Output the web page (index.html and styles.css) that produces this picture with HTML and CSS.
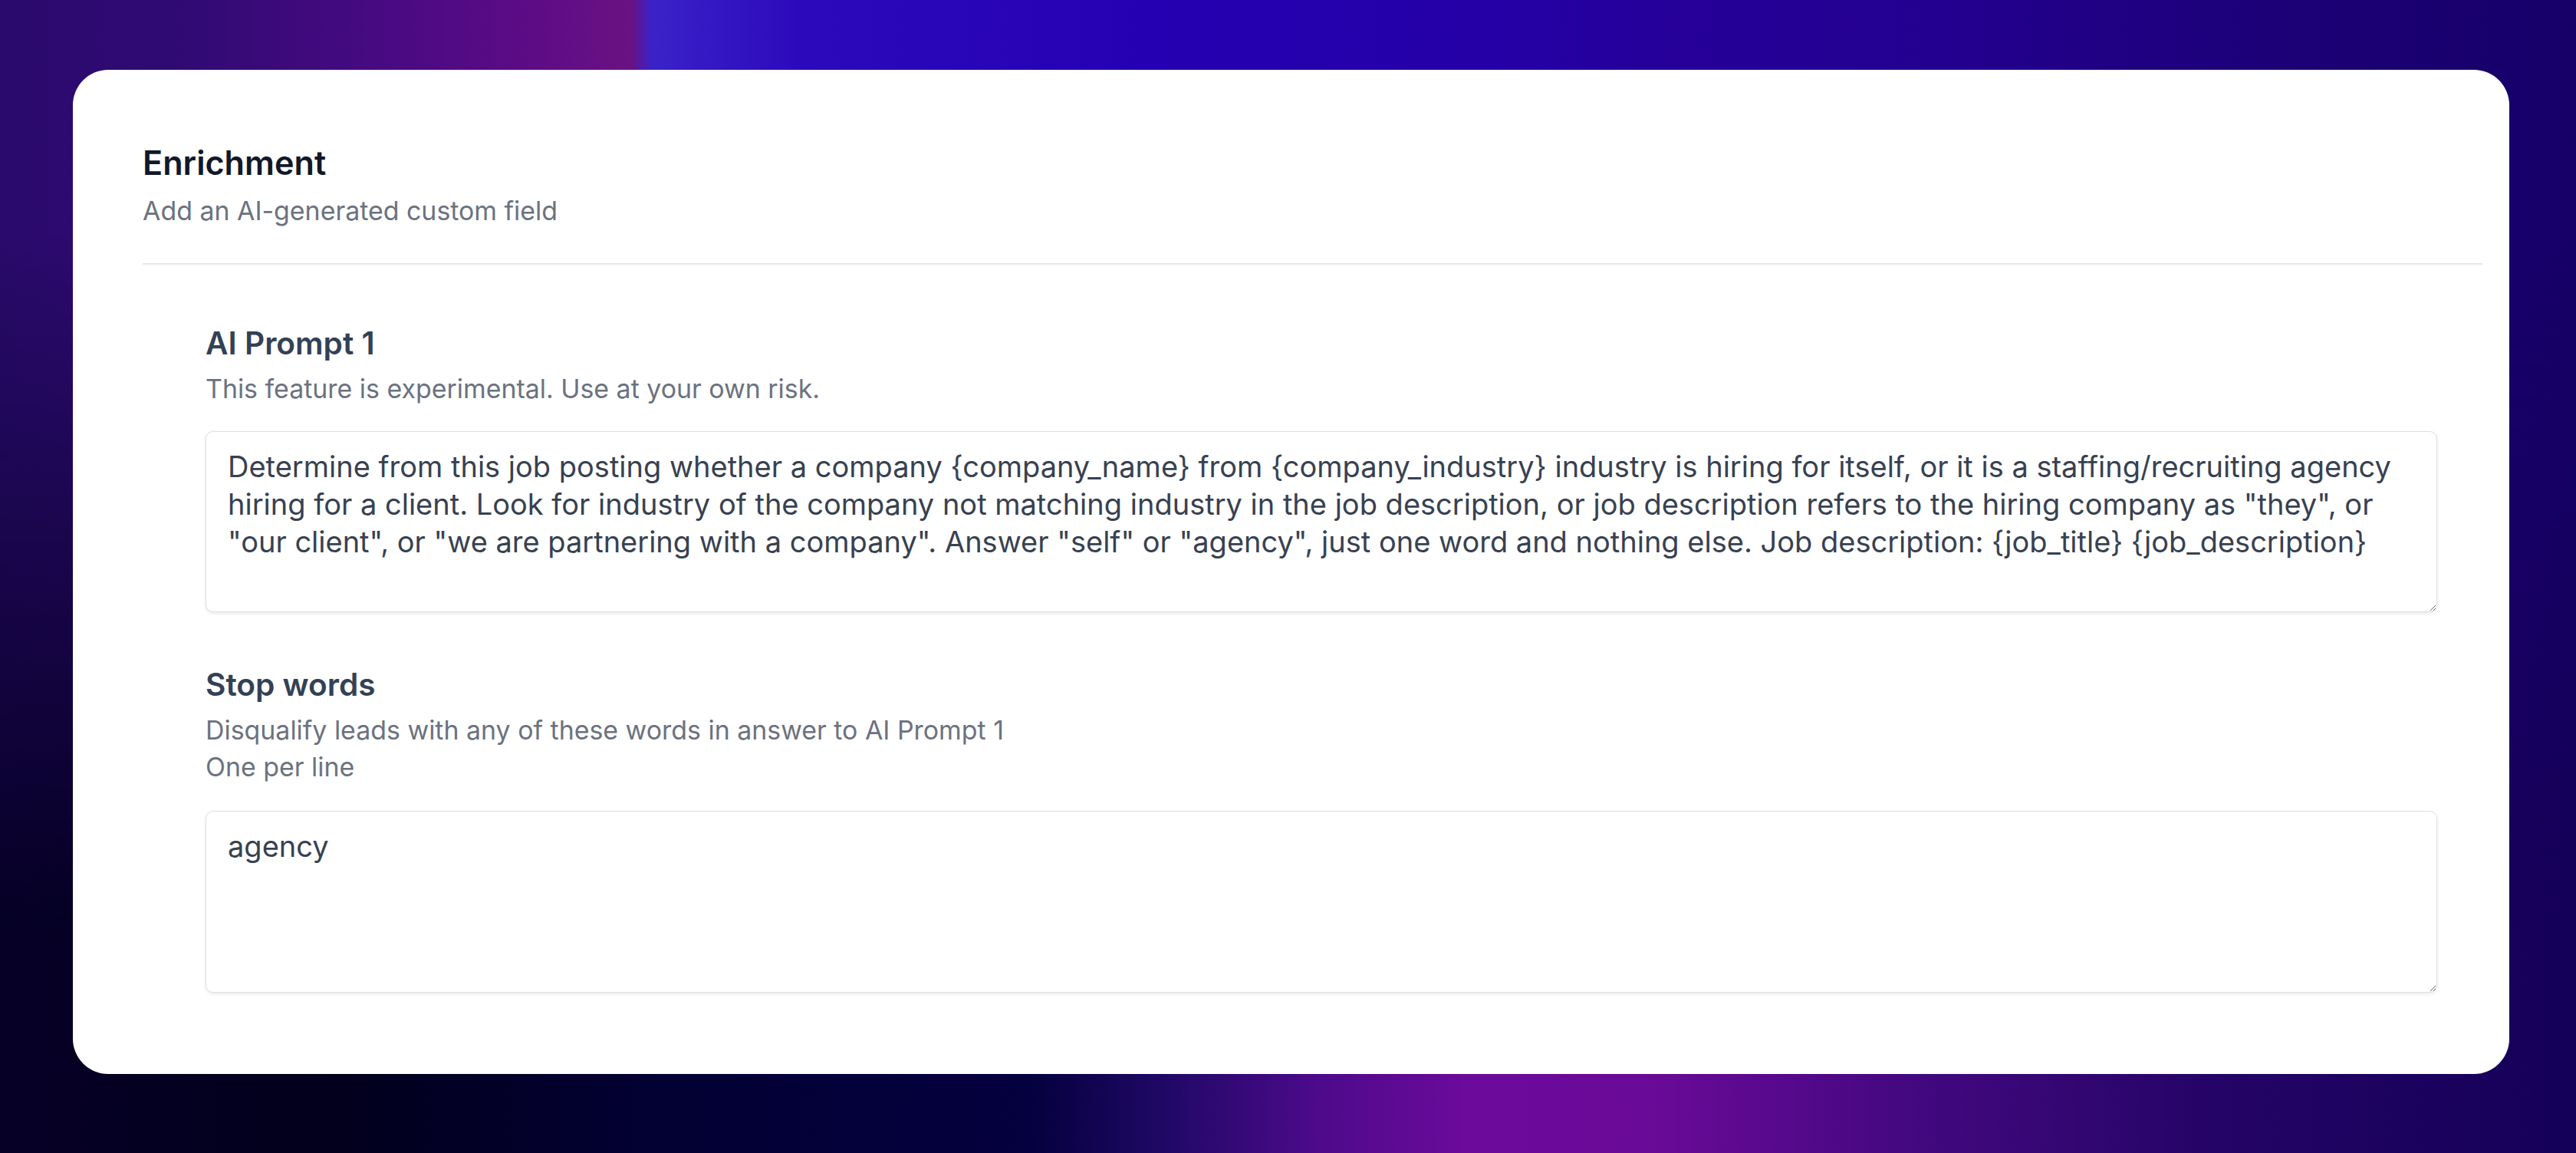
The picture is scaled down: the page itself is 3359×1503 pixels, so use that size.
FILE: index.html
```html
<!DOCTYPE html>
<html lang="en">
<head>
<meta charset="utf-8">
<title>Enrichment</title>
<link rel="stylesheet" href="styles.css">
</head>
<body>
<main class="card">
  <header class="card-header">
    <h2 class="title">Enrichment</h2>
    <p class="subtitle">Add an AI-generated custom field</p>
  </header>
  <section class="fields">
    <div class="field">
      <label class="label" for="prompt1">AI Prompt 1</label>
      <p class="help">This feature is experimental. Use at your own risk.</p>
      <textarea id="prompt1" class="input">Determine from this job posting whether a company {company_name} from {company_industry} industry is hiring for itself, or it is a staffing/recruiting agency hiring for a client. Look for industry of the company not matching industry in the job description, or job description refers to the hiring company as "they", or "our client", or "we are partnering with a company". Answer "self" or "agency", just one word and nothing else. Job description: {job_title} {job_description}</textarea>
    </div>
    <div class="field field-next">
      <label class="label" for="stopwords">Stop words</label>
      <p class="help">Disqualify leads with any of these words in answer to AI Prompt 1<br>One per line</p>
      <textarea id="stopwords" class="input input-second">agency</textarea>
    </div>
  </section>
</main>
</body>
</html>
```

FILE: styles.css
```css
html {
  background: linear-gradient(90deg, #060026 0%, #02001c 13%, #030034 26%, #05003e 40%, #1e0864 45%, #4c0a8a 51%, #6c0a9c 57%, #6a0a98 64%, #440880 74%, #240466 86%, #140058 100%);
}

body {
  margin: 0;
  min-height: 100vh;
  box-sizing: border-box;
  padding: 91px 87px 103px 95px;
  font-family: Inter, "Noto Sans", "Liberation Sans", sans-serif;
}

body::before {
  content: "";
  position: fixed;
  inset: 0;
  z-index: -1;
  background: linear-gradient(90deg, #2a0a6c 0%, #300a74 7%, #480a82 15%, #5e0c86 21%, #6a1282 24.5%, #3a22c8 25.3%, #2c0abc 31%, #2400b2 45%, #2500a6 58%, #26009a 64%, #240090 75%, #1c0078 88%, #160068 100%);
  -webkit-mask-image: linear-gradient(180deg, #000 0%, #000 20%, transparent 80%);
  mask-image: linear-gradient(180deg, #000 0%, #000 20%, transparent 80%);
}

.card {
  background: #ffffff;
  border-radius: 46px;
  padding: 93px 35px 106px 91px;
}

.card-header {
  padding-bottom: 46px;
  border-bottom: 2px solid #e5e7eb;
}

.title {
  margin: 0;
  font-size: 43.2px;
  line-height: 56px;
  font-weight: 600;
  color: #111827;
}

.subtitle {
  margin: 13px 0 0;
  font-size: 33.9px;
  line-height: 44px;
  color: #6b7280;
}

.fields {
  padding: 78px 59px 0 82px;
}

.field-next {
  margin-top: 70px;
}

.label {
  display: block;
  font-size: 40.6px;
  line-height: 50px;
  font-weight: 600;
  color: #334155;
}

.help {
  margin: 10px 0 0;
  font-size: 33.9px;
  line-height: 48px;
  color: #6b7280;
}

.input {
  display: block;
  box-sizing: border-box;
  width: 100%;
  height: 236px;
  margin-top: 31px;
  padding: 21px 28px;
  border: 1px solid #dcdfe5;
  border-radius: 10px;
  box-shadow: 0 2px 5px rgba(17, 24, 39, 0.09);
  font-family: Inter, "Noto Sans", "Liberation Sans", sans-serif;
  font-size: 38px;
  line-height: 49px;
  color: #374151;
  background: #ffffff;
}

.input-second {
  height: 237px;
  margin-top: 33px;
}
```
